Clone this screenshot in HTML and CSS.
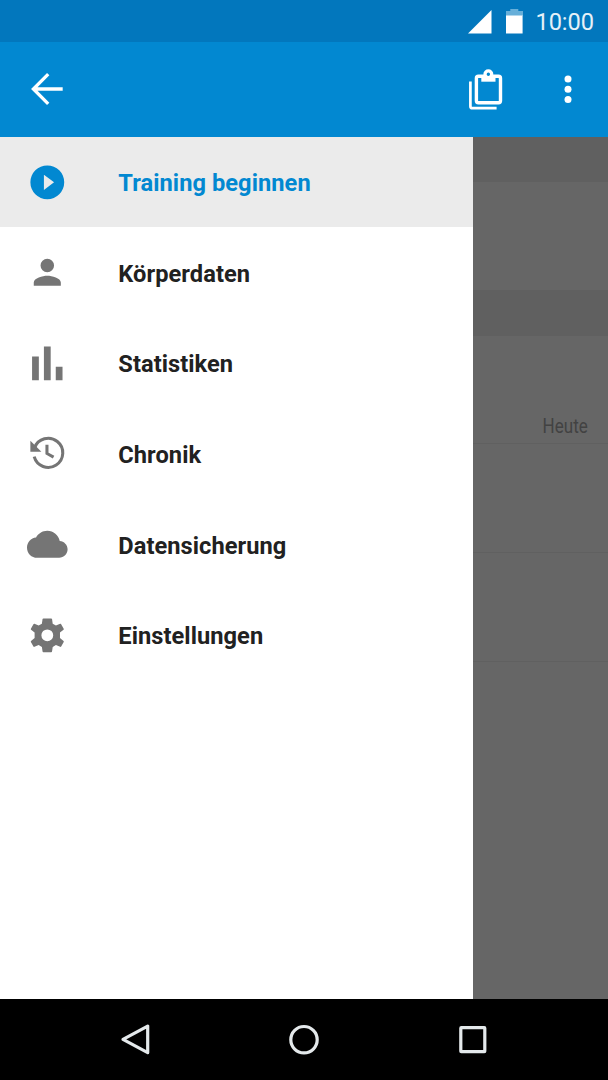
FILE: index.html
```html
<!DOCTYPE html>
<html lang="de">
<head>
<meta charset="utf-8">
<title>Training</title>
<link rel="stylesheet" href="styles.css">
</head>
<body>
<div class="screen">
  <div class="status-bar">
    <svg class="signal" width="24" height="24" viewBox="0 0 24 24"><path fill="#fff" d="M23.5 0v23.5H0z"/></svg>
    <svg class="battery" width="17" height="25" viewBox="0 0 17 25"><path fill="#67afd9" d="M4.3 0h8v2H17v5H0V2h4.3z"/><path fill="#fff" d="M0 6.5h16.6V24.500H0z"/></svg>
    <span class="clock">10:00</span>
  </div>
  <header class="app-bar">
    <svg class="back" width="34" height="34" viewBox="0 0 34 34" fill="none" stroke="#fff" stroke-width="3.3"><path d="M32.700 17H4M18.200 2.200L3.400 17l14.800 14.800"/></svg>
    <svg class="clipboard" width="34" height="42" viewBox="0 -1.2 34 42" fill="none" stroke="#fff"><rect x="7.400" y="7" width="24.100" height="26.500" rx="2" stroke-width="3.400"/><path stroke-width="2.700" d="M1.400 12.300V37q0 2 2 2h24.200"/><path fill="#fff" stroke="none" d="M12.300 8h14.200v4.500H12.300z"/><circle cx="19.350" cy="5.100" r="3.350" fill="#0288d1" stroke-width="3.300"/></svg>
    <svg class="more" width="8" height="30" viewBox="0 0 8 30" fill="#fff"><circle cx="4" cy="5" r="3.500"/><circle cx="4" cy="15.200" r="3.500"/><circle cx="4" cy="25.400" r="3.500"/></svg>
  </header>
  <main class="body">
    <nav class="drawer">
      <a class="item active"><svg class="icon" viewBox="0 0 24 24"><path d="M12 2a10 10 0 1 0 0 20a10 10 0 0 0 0-20zM10 16.500v-9l6 4.500z"/></svg><span>Training beginnen</span></a>
      <a class="item"><svg class="icon" viewBox="0 0 24 24"><path d="M12 12a4 4 0 1 0 0-8a4 4 0 0 0 0 8zm0 2c-2.670 0-8 1.340-8 4v2h16v-2c0-2.660-5.330-4-8-4z"/></svg><span>Körperdaten</span></a>
      <a class="item"><svg class="icon" viewBox="0 0 24 24"><path d="M3 8h4v14H3zM10 2h4v20h-4zM17 14h4v8h-4z"/></svg><span>Statistiken</span></a>
      <a class="item"><svg class="icon" viewBox="0 0 24 24"><path d="M2 4.600v6.500h6.500z"/><path class="line" d="M4.500 8.700A8.600 8.600 0 1 1 4.250 14"/><path class="line" d="M11.800 7v5.100l3.900 2.200"/></svg><span>Chronik</span></a>
      <a class="item"><svg class="icon" viewBox="0 0 24 24"><path d="M19.350 10.040C18.670 6.590 15.640 4 12 4 9.110 4 6.600 5.640 5.350 8.040 2.340 8.360 0 10.910 0 14c0 3.310 2.690 6 6 6h13c2.760 0 5-2.240 5-5 0-2.640-2.050-4.780-4.650-4.960z"/></svg><span>Datensicherung</span></a>
      <a class="item"><svg class="icon" viewBox="0 0 24 24"><path fill-rule="evenodd" d="M9.700 2h4.600q.4 0 .5.400l.4 2.700 1.900 1.100 2.500-1q.4-.2.600.2l1.500 2.700q.2.400-.1.600l-2.100 1.700v3.200l2.100 1.700q.3.200.1.600l-1.500 2.700q-.2.400-.6.200l-2.500-1-1.900 1.100-.4 2.700q-.1.400-.5.400H9.700q-.4 0-.5-.4l-.4-2.700-1.900-1.100-2.500 1q-.4.200-.6-.2l-1.500-2.700q-.2-.4.100-.6l2.100-1.700v-3.200L2.400 8.700q-.3-.2-.1-.6l1.500-2.700q.2-.4.600-.2l2.500 1 1.900-1.100.4-2.700q.1-.4.500-.4zM12 8.500a3.500 3.500 0 1 0 0 7a3.500 3.500 0 0 0 0-7z"/></svg><span>Einstellungen</span></a>
    </nav>
    <section class="content">
      <div class="band"></div>
      <div class="card"></div>
      <div class="band"></div>
      <div class="row first"><span class="date">Heute</span></div>
      <div class="row"></div>
      <div class="row"></div>
    </section>
  </main>
  <footer class="nav-bar">
    <svg width="168" height="40" viewBox="0 0 168 40"><path d="M95.700 6.100v26.600L71 19.400z"/></svg>
    <svg width="168" height="40" viewBox="0 0 168 40"><circle cx="84" cy="19.700" r="13.200"/></svg>
    <svg width="168" height="40" viewBox="0 0 168 40"><rect x="72.800" y="7.700" width="24" height="24" rx=".5"/></svg>
  </footer>
</div>
</body>
</html>
```
FILE: styles.css
```css
* { box-sizing: border-box; }
body { margin: 0; font-family: Roboto, "Noto Sans", sans-serif; }
svg { display: block; flex: none; }
.screen { width: 608px; height: 1080px; display: flex; flex-direction: column; overflow: hidden; }
.status-bar { height: 42px; flex: none; background: #0277bd; display: flex; align-items: flex-start; justify-content: flex-end; padding: 9px 14px 0 0; }
.signal { margin: 1px 14px 0 0; }
.battery { margin-right: 12.500px; }
.clock { font-size: 23.64px; line-height: 26px; color: #e5f1f8; width: 58.500px; white-space: nowrap; letter-spacing: -.1px; }
.app-bar { height: 94.600px; flex: none; background: #0288d1; display: flex; align-items: center; padding: 0 36.500px 0 29.500px; }
.clipboard { margin-left: auto; margin-right: 60.500px; }
.body { flex: 1; display: flex; min-height: 0; }
.drawer { width: 473px; background: #fff; display: flex; flex-direction: column; }
.item { height: 90.600px; display: flex; align-items: center; gap: 50.700px; padding: 0 0 0 27px; color: #212121; font-size: 23.640px; font-weight: 700; letter-spacing: .06px; }
.item span { padding-top: 2.800px; }
.active { background: #ebebeb; color: #0288d1; }
.icon { width: 40.600px; height: 40.600px; fill: #757575; }
.active .icon { fill: #0288d1; }
.line { fill: none; stroke: #757575; stroke-width: 1.800; }
.content { flex: 1; background: #666; }
.band { height: 45.600px; background: #606060; }
.card { height: 108px; }
.row { height: 109px; border-bottom: 1px solid #606060; }
.first { height: 108px; display: flex; align-items: flex-end; justify-content: flex-end; padding: 0 20px 4px 0; }
.date { font-size: 20.300px; line-height: 26px; color: #424242; transform: scaleX(.84); transform-origin: right; }
.nav-bar { height: 81px; flex: none; background: #000; display: flex; align-items: center; justify-content: center; }
.nav-bar svg { fill: none; stroke: #e4e9eb; stroke-width: 3.200; stroke-linejoin: round; }
```
